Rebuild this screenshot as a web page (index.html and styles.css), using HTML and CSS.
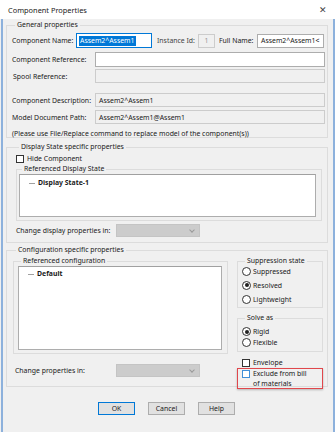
FILE: index.html
```html
<!DOCTYPE html>
<html lang="en">
<head>
    <meta charset="UTF-8">
    <title>Component Properties</title>
    <link rel="stylesheet" href="styles.css">
</head>
<body>

<div class="window">
    <!-- Title bar -->
    <div class="titlebar">
        <span class="title">Component Properties</span>
        <span class="close">&#10005;</span>
    </div>

    <div class="dialog">
        <!-- General properties -->
        <fieldset class="group general">
            <legend>General properties</legend>
            <div class="row row-name">
                <span class="lbl lbl-name">Component Name:</span>
                <span class="field focus name-field"><span class="sel">Assem2^Assem1</span></span>
                <span class="lbl lbl-inst">Instance Id:</span>
                <span class="field disabled inst-field">1</span>
                <span class="lbl lbl-full">Full Name:</span>
                <span class="field full-field">Assem2^Assem1&lt;</span>
            </div>
            <div class="row row-ref">
                <span class="lbl lbl-wide">Component Reference:</span>
                <span class="field grow"></span>
            </div>
            <div class="row row-spool">
                <span class="lbl lbl-wide lbl-indent">Spool Reference:</span>
                <span class="field disabled grow"></span>
            </div>
            <div class="row row-desc">
                <span class="lbl lbl-wide">Component Description:</span>
                <span class="field disabled grow">Assem2^Assem1</span>
            </div>
            <div class="row row-path">
                <span class="lbl lbl-wide">Model Document Path:</span>
                <span class="field disabled grow">Assem2^Assem1@Assem1</span>
            </div>
            <p class="note">(Please use File/Replace command to replace model of the component(s))</p>
        </fieldset>

        <!-- Display state -->
        <fieldset class="group display">
            <legend>Display State specific properties</legend>
            <div class="check-row">
                <span class="check"></span>
                <span>Hide Component</span>
            </div>
            <fieldset class="sub display-sub">
                <legend>Referenced Display State</legend>
                <div class="list display-list">
                    <div class="tree-item"><span class="dash"></span><b>Display State-1</b></div>
                </div>
            </fieldset>
            <div class="row row-change">
                <span class="lbl lbl-change">Change display properties in:</span>
                <span class="combo"><span class="arrow"></span></span>
            </div>
        </fieldset>

        <!-- Configuration -->
        <fieldset class="group config">
            <legend>Configuration specific properties</legend>
            <div class="config-cols">
                <div class="config-left">
                    <fieldset class="sub config-sub">
                        <legend>Referenced configuration</legend>
                        <div class="list config-list">
                            <div class="tree-item"><span class="dash"></span><b>Default</b></div>
                        </div>
                    </fieldset>
                    <div class="row row-change2">
                        <span class="lbl lbl-change">Change properties in:</span>
                        <span class="combo"><span class="arrow"></span></span>
                    </div>
                </div>
                <div class="config-right">
                    <fieldset class="sub small-group suppress">
                        <legend>Suppression state</legend>
                        <div class="radio-row first"><span class="radio"></span>Suppressed</div>
                        <div class="radio-row"><span class="radio on"></span>Resolved</div>
                        <div class="radio-row"><span class="radio"></span>Lightweight</div>
                    </fieldset>
                    <fieldset class="sub small-group solve">
                        <legend>Solve as</legend>
                        <div class="radio-row tight"><span class="radio on"></span>Rigid</div>
                        <div class="radio-row tight"><span class="radio"></span>Flexible</div>
                    </fieldset>
                    <div class="check-row envelope">
                        <span class="check"></span>
                        <span>Envelope</span>
                    </div>
                    <div class="exclude">
                        <span class="check hover"></span>
                        <span>Exclude from bill<br>of materials</span>
                    </div>
                </div>
            </div>
        </fieldset>

        <!-- Buttons -->
        <div class="buttons">
            <span class="btn default">OK</span>
            <span class="btn">Cancel</span>
            <span class="btn">Help</span>
        </div>
    </div>
</div>

</body>
</html>
```

FILE: styles.css
```css
html, body {
    margin: 0;
    height: 100%;
}

body {
    background-color: #f0f0f0;
    font-family: "Noto Sans", "Open Sans", sans-serif;
    font-size: 6.9px;
    color: #1a1a1a;
}

.window {
    width: 335px;
    height: 432px;
    display: flex;
    flex-direction: column;
}

.titlebar {
    height: 19px;
    background-color: #ffffff;
    display: flex;
    align-items: center;
    justify-content: space-between;
    padding: 0 8px 0 8px;
    box-sizing: border-box;
    flex-shrink: 0;
}

.title {
    font-size: 7.4px;
    color: #222;
}

.close {
    font-size: 9px;
    color: #444;
}

.dialog {
    flex: 1;
    margin-left: 1px;
    border-left: 2px solid #8db1dc;
    border-right: 2px solid #8db1dc;
    background-color: #f0f0f0;
    padding: 1px 5px 0 3px;
    display: flex;
    flex-direction: column;
}

/* group boxes */
fieldset {
    margin: 0;
    padding: 0;
    border: 1px solid #dcdcdc;
    min-width: 0;
}

legend {
    padding: 0 2px;
    margin-left: 3px;
    line-height: 10px;
    height: 10px;
}

.general {
    padding: 3px 2px 0 5px;
    height: 118px;
    box-sizing: border-box;
}

.row {
    display: flex;
    align-items: center;
}

.lbl {
    white-space: nowrap;
}

.field {
    box-sizing: border-box;
    height: 14px;
    border: 1px solid #adadad;
    background-color: #ffffff;
    display: flex;
    align-items: center;
    padding: 0 3px;
    white-space: nowrap;
    overflow: hidden;
}

.field.disabled {
    background-color: #f0f0f0;
    border-color: #cccccc;
}

.field.focus {
    border-color: #0078d7;
    padding: 0 2px;
}

.sel {
    background-color: #0078d7;
    color: #fff;
    padding: 0 1px;
    line-height: 10px;
}

.grow {
    flex: 1;
}

.row-name {
    height: 15px;
}

.lbl-name {
    width: 64px;
}

.name-field {
    width: 76px;
    height: 15px;
}

.lbl-inst {
    margin-left: 5px;
    width: 41px;
    color: #444;
}

.inst-field {
    width: 17px;
    justify-content: center;
    color: #9a9a9a;
}

.lbl-full {
    margin-left: 4px;
    width: 38px;
}

.full-field {
    width: 67px;
}

.lbl-wide {
    width: 83px;
}

.lbl-indent {
    padding-left: 1px;
    width: 82px;
}

.row-ref {
    margin-top: 4px;
}

.row-ref .field {
    height: 15px;
}

.row-spool {
    margin-top: 2px;
}

.row-desc {
    margin-top: 10px;
}

.row-path {
    margin-top: 3px;
}

.note {
    margin: 5px 0 0 0;
    line-height: 10px;
}

/* display state */
.display {
    margin-top: 4px;
    height: 101px;
    box-sizing: border-box;
    padding: 2px 5px 0 9px;
}

.check-row {
    display: flex;
    align-items: center;
    gap: 3px;
}

.check {
    width: 8px;
    height: 8px;
    box-sizing: border-box;
    border: 1px solid #333;
    background-color: #fff;
    display: inline-block;
    flex-shrink: 0;
}

.check.hover {
    border-color: #3f8fd8;
}

.sub {
    border-color: #dcdcdc;
}

.display-sub {
    margin: 1px 0 0 0;
    padding: 0 5px 3px 2px;
}

.list {
    box-sizing: border-box;
    background-color: #fff;
    border: 1px solid #adadad;
    border-top-color: #a0a0a0;
    padding: 3px 0 0 9px;
}

.display-list {
    height: 43px;
}

.tree-item {
    display: flex;
    align-items: center;
    line-height: 10px;
}

.dash {
    width: 6px;
    height: 1px;
    background-color: #a0a0a0;
    margin-right: 3px;
}

.tree-item b {
    font-weight: bold;
}

.row-change {
    margin-top: 3px;
}

.lbl-change {
    width: 100px;
}

.combo {
    width: 84px;
    height: 13px;
    box-sizing: border-box;
    background-color: #cccccc;
    border: 1px solid #c4c4c4;
    position: relative;
}

.arrow {
    position: absolute;
    right: 5px;
    top: 3px;
    width: 3px;
    height: 3px;
    border-right: 1px solid #9a9a9a;
    border-bottom: 1px solid #9a9a9a;
    transform: rotate(45deg);
}

/* configuration */
.config {
    margin-top: 2px;
    height: 142px;
    box-sizing: border-box;
    padding: 1px 2px 0 6px;
}

.config-cols {
    display: flex;
    gap: 9px;
}

.config-left {
    width: 215px;
}

.config-sub {
    padding: 0 5px 3px 4px;
}

.config-list {
    height: 84px;
    padding-top: 2px;
}

.row-change2 {
    margin-top: 10px;
    padding-left: 2px;
}

.row-change2 .lbl-change {
    width: 101px;
}

.config-right {
    width: 86px;
    display: flex;
    flex-direction: column;
}

.small-group {
    padding: 0 0 2px 4px;
}

.radio-row {
    display: flex;
    align-items: center;
    gap: 2px;
    height: 14px;
}

.radio-row.first {
    margin-top: -2px;
}

.radio-row.tight {
    height: 11px;
}

.radio {
    width: 9px;
    height: 9px;
    box-sizing: border-box;
    border: 1px solid #333;
    border-radius: 50%;
    background-color: #fff;
    position: relative;
    flex-shrink: 0;
}

.radio.on::after {
    content: "";
    position: absolute;
    left: 1.5px;
    top: 1.5px;
    width: 4px;
    height: 4px;
    border-radius: 50%;
    background-color: #222;
}

.suppress {
    height: 52px;
    box-sizing: border-box;
}

.solve {
    margin-top: 5px;
    height: 39px;
    box-sizing: border-box;
    padding-top: 3px;
}

.envelope {
    margin: 6px 0 0 5px;
}

.exclude {
    margin-top: 1px;
    height: 21px;
    box-sizing: border-box;
    border: 1px solid #e0474c;
    box-shadow: 0 1px 2px rgba(0, 0, 0, 0.25);
    display: flex;
    align-items: flex-start;
    gap: 3px;
    padding: 0 0 0 4px;
    line-height: 9.5px;
}

.exclude .check {
    margin-top: 1px;
}

/* buttons */
.buttons {
    display: flex;
    justify-content: center;
    gap: 13px;
    margin-top: 15px;
    padding-right: 1px;
}

.btn {
    width: 37px;
    height: 13px;
    box-sizing: border-box;
    border: 1px solid #adadad;
    background-color: #e1e1e1;
    display: flex;
    align-items: center;
    justify-content: center;
}

.btn.default {
    border-color: #0078d7;
}
```
